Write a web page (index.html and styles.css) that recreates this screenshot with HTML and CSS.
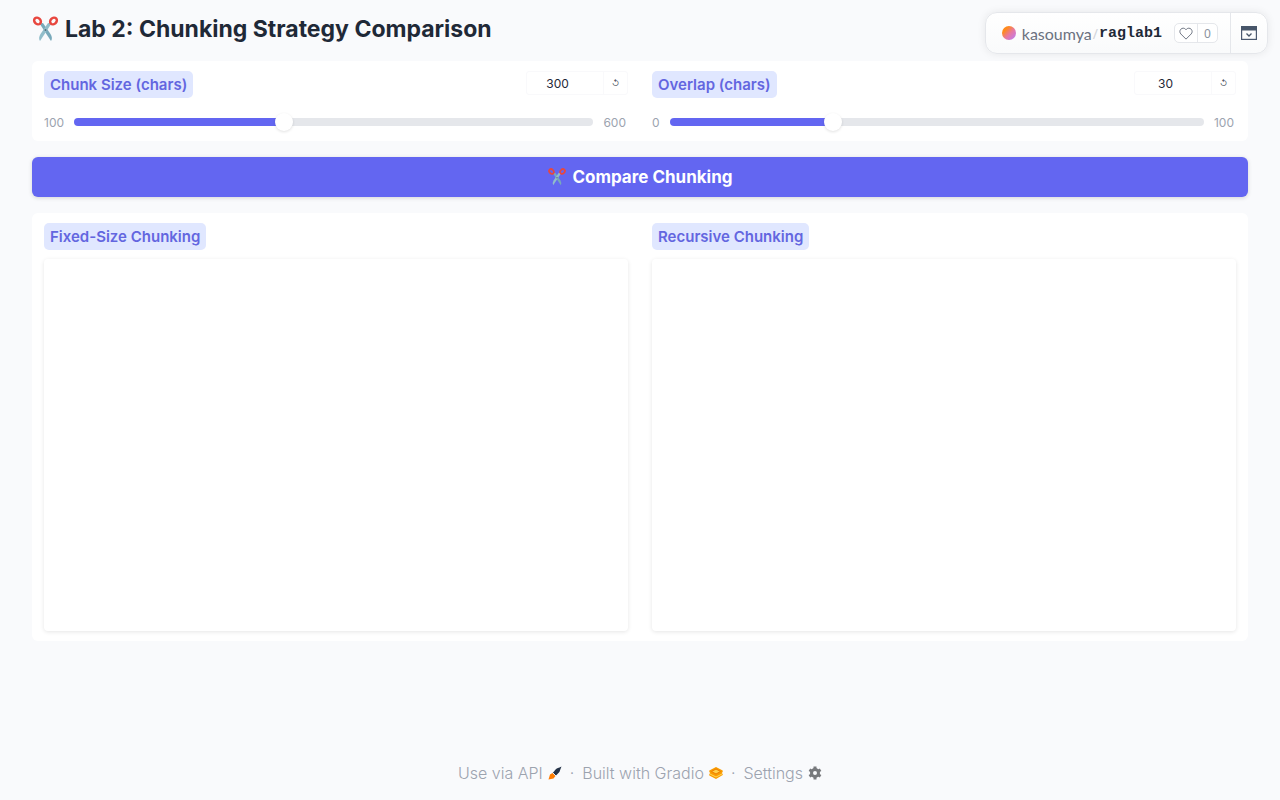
FILE: index.html
```html
<!DOCTYPE html>
<html lang="en">
<head>
    <meta charset="UTF-8">
    <meta name="viewport" content="width=device-width, initial-scale=1.0">
    <title>Lab 2: Chunking Strategy Comparison</title>
    <link rel="stylesheet" href="styles.css">
</head>
<body>
    <svg width="0" height="0" class="defs" aria-hidden="true">
        <symbol id="scissors" viewBox="0 0 26 26">
            <path d="M7 7.500 L18.500 25 Q20.500 22 18 18 L10.500 7z" fill="#78a9ba"/>
            <path d="M19 7.500 L7.500 25 Q5.500 22 8 18 L15.500 7z" fill="#91bdca"/>
            <circle cx="13" cy="14" r="1" fill="#546e7a"/>
            <ellipse cx="5" cy="5" rx="3" ry="3.700" transform="rotate(-45 5 5)" fill="none" stroke="#e8473f" stroke-width="2.500"/>
            <ellipse cx="21" cy="5" rx="3" ry="3.700" transform="rotate(45 21 5)" fill="none" stroke="#e8473f" stroke-width="2.500"/>
        </symbol>
    </svg>

    <div class="space-badge">
        <div class="space-info">
            <span class="avatar"></span>
            <a href="#" class="owner">kasoumya</a>
            <span class="slash">/</span>
            <a href="#" class="space-name">raglab1</a>
            <button class="like" aria-label="Like">
                <span class="heart">
                    <svg width="14" height="14" viewBox="0 0 32 32"><path d="M22.500 5c-2.600 0-5 1.300-6.500 3.500C14.500 6.300 12.100 5 9.500 5 5.400 5 2 8.500 2 12.800c0 2.100.8 4 2.200 5.400L16 30l11.800-11.800c1.400-1.400 2.200-3.300 2.200-5.400C30 8.500 26.600 5 22.500 5z" fill="none" stroke="#6b7280" stroke-width="2.200"/></svg>
                </span>
                <span class="count">0</span>
            </button>
        </div>
        <button class="collapse" aria-label="Collapse">
            <svg width="16" height="14" viewBox="0 0 16 14"><rect x=".6" y=".6" width="14.800" height="12.800" fill="none" stroke="#4b5970" stroke-width="1.200"/><path d="M0 0h16v4.500H0z" fill="#475569"/><path d="M5.500 7.500 8 10l2.500-2.500" fill="none" stroke="#475569" stroke-width="1.300"/></svg>
        </button>
    </div>

    <main>
        <h1><svg class="title-icon"><use href="#scissors"/></svg>Lab 2: Chunking Strategy Comparison</h1>

        <div class="panel">
            <div class="col">
                <div class="head">
                    <label for="size" class="tag">Chunk Size (chars)</label>
                    <div class="number">
                        <input type="number" value="300" min="100" max="600" aria-label="Chunk size value">
                        <button aria-label="Reset chunk size">↺</button>
                    </div>
                </div>
                <div class="slider">
                    <span>100</span>
                    <input type="range" id="size" min="100" max="600" value="300" style="--fill: 40%">
                    <span>600</span>
                </div>
            </div>
            <div class="col">
                <div class="head">
                    <label for="overlap" class="tag">Overlap (chars)</label>
                    <div class="number">
                        <input type="number" value="30" min="0" max="100" aria-label="Overlap value">
                        <button aria-label="Reset overlap">↺</button>
                    </div>
                </div>
                <div class="slider">
                    <span>0</span>
                    <input type="range" id="overlap" min="0" max="100" value="30" style="--fill: 30%">
                    <span>100</span>
                </div>
            </div>
        </div>

        <button class="primary"><svg class="button-icon"><use href="#scissors"/></svg>Compare Chunking</button>

        <div class="panel">
            <div class="col">
                <label for="fixed" class="tag">Fixed-Size Chunking</label>
                <textarea id="fixed" rows="16" readonly></textarea>
            </div>
            <div class="col">
                <label for="recursive" class="tag">Recursive Chunking</label>
                <textarea id="recursive" rows="16" readonly></textarea>
            </div>
        </div>
    </main>

    <footer>
        <a href="#">Use via API
            <svg width="14" height="14" viewBox="0 0 14 14"><path d="M6 5.500Q8 2 11.500 1.500L13.500.5 12.500 3Q12 6.500 9 8.500L7.500 10 4.500 7z" fill="#253348"/><path d="M.5 13.500 2 8.500l2.500-1.500 3 3-2 2.500z" fill="#ff7c00"/><path d="m4.500 6.500 3.500 3.500" stroke="#fff" stroke-width=".9"/></svg>
        </a>
        <span>·</span>
        <a href="#">Built with Gradio
            <svg width="14" height="14" viewBox="0 0 14 14"><path d="m7 1 6.700 3.500v1.500l-1 1 1 1v1L7 13 .3 9.500V8l1-1-1-1V4.500z" fill="#f99c00"/><path d="m2.500 5.500 4.500-2.500 4.500 2.500L7 8z" fill="#ffd04a" stroke="#ee7c00"/><path d="m1 8 6 3 6-3" fill="none" stroke="#ffd65a"/></svg>
        </a>
        <span>·</span>
        <a href="#">Settings
            <svg width="14" height="14" viewBox="0 0 14 14"><circle cx="7" cy="7" r="3.500" fill="none" stroke="#77797c" stroke-width="3"/><path d="M7 .5v2.500M7 11v2.500M1.400 3.700l2.200 1.300M10.400 9l2.200 1.300M1.400 10.300 3.600 9M10.400 5l2.200-1.300" stroke="#77797c" stroke-width="3"/></svg>
        </a>
    </footer>
</body>
</html>
```

FILE: styles.css
```css
* {
    margin: 0;
    padding: 0;
    box-sizing: border-box;
}
body {
    display: flex;
    flex-direction: column;
    min-height: 100vh;
    background-color: #f9fafc;
    color: #1f2937;
    font-family: Inter, "Open Sans", sans-serif;
    font-size: 14px;
}
button, input, textarea {
    font-family: inherit;
}
a {
    color: inherit;
    text-decoration: none;
}
svg {
    flex: none;
}
.defs {
    position: absolute;
}

/* floating space badge */
.space-badge {
    position: absolute;
    top: 12px;
    right: 12px;
    display: flex;
    height: 42px;
    border: 1px solid #e5e7eb;
    border-radius: 12px;
    background: linear-gradient(#fff, #f9fafb);
    box-shadow: 0 0 8px rgba(0, 0, 0, 0.08);
}
.space-info {
    display: flex;
    align-items: center;
    padding: 0 12px 0 16px;
    font-family: "Noto Sans", sans-serif;
}
.avatar {
    width: 14px;
    height: 14px;
    margin-right: 6px;
    border-radius: 50%;
    background: linear-gradient(135deg, #ff8a1c 25%, #e879a0 55%, #b77cff);
}
.owner {
    font-family: Lato, sans-serif;
    font-size: 16px;
    color: #6b7280;
}
.slash {
    margin: 0 1px;
    color: #d1d5db;
}
.space-name {
    font-family: "Liberation Mono", monospace;
    font-size: 15px;
    font-weight: bold;
}
.like {
    display: flex;
    align-items: center;
    height: 20px;
    margin-left: 12px;
    border: 1px solid #e5e7eb;
    border-radius: 5px;
    background: #fff;
    font-size: 12px;
    color: #8b929e;
}
.heart, .count {
    display: flex;
    align-items: center;
    justify-content: center;
    width: 22px;
    height: 18px;
}
.count {
    width: 20px;
    border-left: 1px solid #e5e7eb;
}
.collapse {
    display: flex;
    align-items: center;
    justify-content: center;
    width: 37px;
    border: none;
    border-left: 1px solid #e5e7eb;
    background: none;
}

main {
    display: flex;
    flex-direction: column;
    gap: 16px;
    padding: 13px 32px 0;
}
h1 {
    display: flex;
    align-items: center;
    gap: 6px;
    height: 32px;
    font-size: 23px;
    font-weight: 700;
}
.title-icon {
    width: 27px;
    height: 26px;
}
.panel {
    display: flex;
    gap: 24px;
    padding: 10px 12px;
    border-radius: 6px;
    background: #fff;
}
.col {
    flex: 1;
    min-width: 0;
}
.tag {
    display: inline-block;
    padding: 3px 6px;
    border-radius: 5px;
    background: #e0e7ff;
    color: #6366e0;
    font-size: 15px;
    font-weight: 600;
    line-height: 21px;
}
.head {
    display: flex;
    justify-content: space-between;
    align-items: flex-start;
}
.number {
    display: flex;
    height: 24px;
    border: 1px solid #f9f9fb;
    border-radius: 3px;
}
.number input {
    width: 76px;
    padding-right: 15px;
    border: none;
    background: none;
    color: #1f2937;
    font-size: 12px;
    text-align: center;
    appearance: textfield;
    -moz-appearance: textfield;
}
.number input::-webkit-inner-spin-button {
    display: none;
}
.number button {
    width: 24px;
    border: none;
    border-left: 1px solid #f9f9fb;
    background: none;
    color: #4b5563;
    font-size: 8px;
}
.slider {
    display: flex;
    align-items: center;
    gap: 10px;
    height: 18px;
    margin: 15px 2px 0 0;
    color: #9ca3af;
    font-size: 12px;
}
.slider input {
    flex: 1;
    min-width: 0;
    height: 8px;
    border-radius: 4px;
    background: linear-gradient(to right, #6366f1 var(--fill), #e5e7eb var(--fill));
    appearance: none;
}
.slider input::-webkit-slider-thumb {
    width: 18px;
    height: 18px;
    border-radius: 50%;
    background: #fff;
    box-shadow: 0 1px 3px rgba(0, 0, 0, 0.12);
    appearance: none;
}
.primary {
    display: flex;
    align-items: center;
    justify-content: center;
    gap: 5px;
    height: 40px;
    border: none;
    border-radius: 6px;
    background: #6366f1;
    box-shadow: 0 1px 4px rgba(0, 0, 0, 0.15);
    color: #fff;
    font-size: 17px;
    font-weight: 700;
}
.button-icon {
    width: 20px;
    height: 18px;
}
textarea {
    display: block;
    width: 100%;
    margin-top: 9px;
    padding: 10px;
    border: none;
    border-radius: 4px;
    box-shadow: 0 1px 4px rgba(0, 0, 0, 0.1);
    line-height: 22px;
    resize: none;
}

footer {
    display: flex;
    justify-content: center;
    align-items: center;
    gap: 8px;
    margin-top: auto;
    padding: 16px 0;
    color: #9ca3af;
    font-size: 16px;
    font-weight: 300;
    line-height: 22px;
}
footer a {
    display: flex;
    align-items: center;
    gap: 5px;
}
```
